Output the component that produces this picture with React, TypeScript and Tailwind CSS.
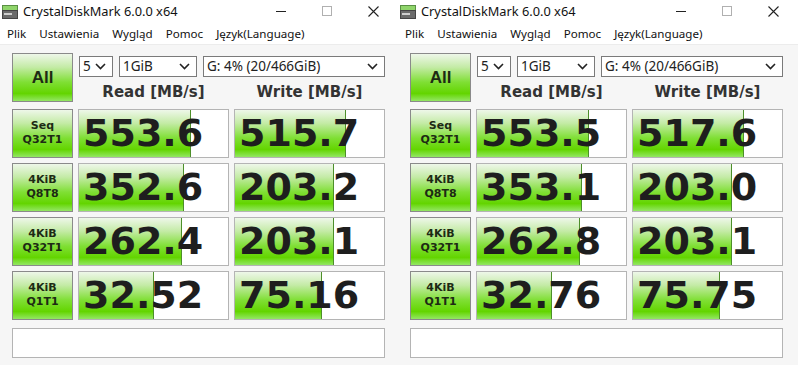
import React from "react";

type Row = {
  top: string;
  bottom: string;
  read: string;
  readFill: number;
  write: string;
  writeFill: number;
};

type Bench = {
  rows: Row[];
};

const benches: Bench[] = [
  {
    rows: [
      { top: "Seq", bottom: "Q32T1", read: "553.6", readFill: 112, write: "515.7", writeFill: 111 },
      { top: "4KiB", bottom: "Q8T8", read: "352.6", readFill: 105, write: "203.2", writeFill: 99 },
      { top: "4KiB", bottom: "Q32T1", read: "262.4", readFill: 103, write: "203.1", writeFill: 99 },
      { top: "4KiB", bottom: "Q1T1", read: "32.52", readFill: 75, write: "75.16", writeFill: 87 },
    ],
  },
  {
    rows: [
      { top: "Seq", bottom: "Q32T1", read: "553.5", readFill: 112, write: "517.6", writeFill: 111 },
      { top: "4KiB", bottom: "Q8T8", read: "353.1", readFill: 105, write: "203.0", writeFill: 99 },
      { top: "4KiB", bottom: "Q32T1", read: "262.8", readFill: 103, write: "203.1", writeFill: 99 },
      { top: "4KiB", bottom: "Q1T1", read: "32.76", readFill: 75, write: "75.75", writeFill: 87 },
    ],
  },
];

const uiFont = "font-['Noto_Sans','Open_Sans',sans-serif]";
const greenBg =
  "bg-[linear-gradient(to_bottom,#eef7e9_0%,#c4eba6_28%,#7fdf34_60%,#63d500_84%,#93e764_100%)]";

const Chevron = () => (
  <svg width="11" height="7" viewBox="0 0 11 7" className="shrink-0">
    <path d="M1 1 L5.5 5.5 L10 1" fill="none" stroke="#222" strokeWidth="1.6" />
  </svg>
);

const Combo = ({ text, className }: { text: string; className: string }) => (
  <div
    className={`h-[21px] flex items-center justify-between border border-[#7a7a7a] bg-white pl-[3px] pr-[6px] text-[13.5px] text-[#222] ${uiFont} ${className}`}
  >
    <span className="leading-none">{text}</span>
    <Chevron />
  </div>
);

const AppIcon = () => (
  <svg width="16" height="14" viewBox="0 0 16 14">
    <rect x="0.5" y="0.5" width="15" height="5" fill="#8fd46a" stroke="#5a8f45" />
    <rect x="0.5" y="5.5" width="15" height="8" fill="#6b6b6b" stroke="#444" />
    <rect x="2" y="8" width="8" height="2" fill="#cfcfcf" />
  </svg>
);

const Cell = ({ value, fill }: { value: string; fill: number }) => (
  <div className="relative w-[151px] h-[49px] border border-[#b4b4b4] bg-white overflow-hidden">
    <div
      className={`absolute left-0 top-0 bottom-0 border-r border-[#4d8f2a] ${greenBg}`}
      style={{ width: fill }}
    />
    <div className="relative h-full flex items-center pl-[4px] font-['DejaVu_Sans',sans-serif] font-bold text-[38px] leading-none text-[#1e1e1e]">
      {value}
    </div>
  </div>
);

const Window = ({ bench, className }: { bench: Bench; className: string }) => (
  <div className={`flex flex-col bg-white ${className}`}>
    {/* title bar */}
    <div className="h-[22px] flex items-center">
      <div className="pl-[2px] pr-[5px] pt-[2px]">
        <AppIcon />
      </div>
      <span className={`text-[12.8px] text-[#111] ${uiFont} mt-[1px]`}>CrystalDiskMark 6.0.0 x64</span>
      <div className="ml-auto flex items-center">
        <div className="w-[46px] flex justify-center">
          <div className="w-[10px] h-[1px] bg-[#222]" />
        </div>
        <div className="w-[46px] flex justify-center">
          <div className="w-[10px] h-[10px] border border-[#b0b0b0]" />
        </div>
        <div className="w-[46px] flex justify-center mr-[2px]">
          <svg width="11" height="11" viewBox="0 0 11 11">
            <path d="M0.5 0.5 L10.5 10.5 M10.5 0.5 L0.5 10.5" stroke="#222" strokeWidth="1.1" />
          </svg>
        </div>
      </div>
    </div>

    {/* menu */}
    <div className={`h-[22px] flex items-center gap-[13px] pl-[7px] pt-[2px] text-[11.6px] text-[#111] ${uiFont}`}>
      <span>Plik</span>
      <span>Ustawienia</span>
      <span>Wygląd</span>
      <span>Pomoc</span>
      <span>Język(Language)</span>
    </div>

    {/* content */}
    <div className="flex-1 border-t border-[#ececec] bg-[#f6f6f6] pl-[12px] pt-[8px]">
      <div className="flex gap-[5px]">
        <div
          className={`w-[61px] h-[49px] flex items-center justify-center border border-[#8a8a8a] ${greenBg} font-['Liberation_Sans',sans-serif] font-bold text-[17px] text-[#1d2a14]`}
        >
          All
        </div>
        <div className="flex flex-col">
          <div className="flex gap-[6px] mt-[3px] ml-[1px]">
            <Combo text="5" className="w-[34px]" />
            <Combo text="1GiB" className="w-[78px]" />
            <Combo text="G: 4% (20/466GiB)" className="w-[182px]" />
          </div>
          <div className="flex gap-[5px] mt-[4px] font-['DejaVu_Sans',sans-serif] font-bold text-[15px] text-[#333]">
            <div className="w-[151px] text-center">Read [MB/s]</div>
            <div className="w-[151px] text-center">Write [MB/s]</div>
          </div>
        </div>
      </div>

      {bench.rows.map((r, i) => (
        <div key={i} className="flex gap-[5px] mt-[5px]">
          <div
            className={`w-[61px] h-[49px] flex flex-col items-center justify-center border border-[#8a8a8a] ${greenBg} font-['DejaVu_Sans',sans-serif] font-bold text-[11px] leading-[14px] text-[#1d2a14]`}
          >
            <span>{r.top}</span>
            <span>{r.bottom}</span>
          </div>
          <Cell value={r.read} fill={r.readFill} />
          <Cell value={r.write} fill={r.writeFill} />
        </div>
      ))}

      <div className="mt-[8px] w-[373px] h-[30px] border border-[#b4b4b4] bg-white" />
    </div>
  </div>
);

export default function App() {
  return (
    <div className="w-[798px] h-[365px] flex overflow-hidden bg-white">
      <Window bench={benches[0]} className="w-[398px]" />
      <Window bench={benches[1]} className="flex-1" />
    </div>
  );
}
